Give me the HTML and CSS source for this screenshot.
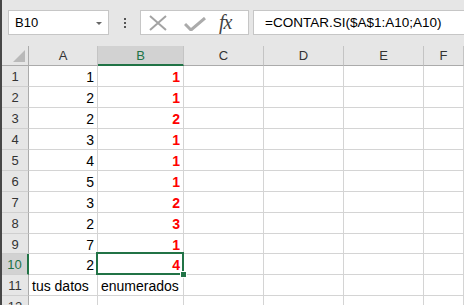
FILE: index.html
```html
<!DOCTYPE html>
<html lang="es">
<head>
    <meta charset="UTF-8">
    <meta name="viewport" content="width=device-width, initial-scale=1.0">
    <title>CONTAR.SI</title>
    <link rel="stylesheet" href="styles.css">
</head>
<body>

<div class="window">
    <div class="toolbar">
        <div class="namebox">
            <span>B10</span>
            <span class="caret"></span>
        </div>
        <div class="grip"><i></i><i></i><i></i></div>
        <div class="fbuttons">
            <svg class="icon-x" width="20" height="16" viewBox="0 0 20 16">
                <path d="M2 1 L18 15 M18 1 L2 15" stroke="#a3a3a3" stroke-width="2" fill="none"/>
            </svg>
            <svg class="icon-check" width="22" height="14" viewBox="0 0 22 14">
                <path d="M1 7 L7 13 L21 1" stroke="#ababab" stroke-width="3" fill="none"/>
            </svg>
            <span class="fx">fx</span>
        </div>
        <div class="formula">=CONTAR.SI($A$1:A10;A10)</div>
    </div>

    <div class="sheet">
        <div class="corner"><span class="tri"></span></div>
        <div class="colhead">A</div>
        <div class="colhead active">B</div>
        <div class="colhead">C</div>
        <div class="colhead">D</div>
        <div class="colhead">E</div>
        <div class="colhead">F</div>

        <div class="rowhead">1</div><div class="cell num">1</div><div class="cell num red">1</div><div class="cell"></div><div class="cell"></div><div class="cell"></div><div class="cell"></div>
        <div class="rowhead">2</div><div class="cell num">2</div><div class="cell num red">1</div><div class="cell"></div><div class="cell"></div><div class="cell"></div><div class="cell"></div>
        <div class="rowhead">3</div><div class="cell num">2</div><div class="cell num red">2</div><div class="cell"></div><div class="cell"></div><div class="cell"></div><div class="cell"></div>
        <div class="rowhead">4</div><div class="cell num">3</div><div class="cell num red">1</div><div class="cell"></div><div class="cell"></div><div class="cell"></div><div class="cell"></div>
        <div class="rowhead">5</div><div class="cell num">4</div><div class="cell num red">1</div><div class="cell"></div><div class="cell"></div><div class="cell"></div><div class="cell"></div>
        <div class="rowhead">6</div><div class="cell num">5</div><div class="cell num red">1</div><div class="cell"></div><div class="cell"></div><div class="cell"></div><div class="cell"></div>
        <div class="rowhead">7</div><div class="cell num">3</div><div class="cell num red">2</div><div class="cell"></div><div class="cell"></div><div class="cell"></div><div class="cell"></div>
        <div class="rowhead">8</div><div class="cell num">2</div><div class="cell num red">3</div><div class="cell"></div><div class="cell"></div><div class="cell"></div><div class="cell"></div>
        <div class="rowhead">9</div><div class="cell num">7</div><div class="cell num red">1</div><div class="cell"></div><div class="cell"></div><div class="cell"></div><div class="cell"></div>
        <div class="rowhead active">10</div><div class="cell num">2</div><div class="cell num red selected">4<span class="handle"></span></div><div class="cell"></div><div class="cell"></div><div class="cell"></div><div class="cell"></div>
        <div class="rowhead">11</div><div class="cell">tus datos</div><div class="cell">enumerados</div><div class="cell"></div><div class="cell"></div><div class="cell"></div><div class="cell"></div>
        <div class="rowhead">12</div><div class="cell"></div><div class="cell"></div><div class="cell"></div><div class="cell"></div><div class="cell"></div><div class="cell"></div>
    </div>
</div>

</body>
</html>
```

FILE: styles.css
```css
body {
    margin: 0;
    padding: 0;
    font-family: "Liberation Sans", Arial, sans-serif;
    color: #000;
    background: #e6e6e6;
}

.window {
    width: 462px;
    height: 305px;
    overflow: hidden;
    border-left: 2px solid #474747;
    background: #e6e6e6;
}

/* formula bar */
.toolbar {
    height: 46px;
    box-sizing: border-box;
    padding-top: 10px;
    display: flex;
    align-items: flex-start;
}

.namebox {
    margin-left: 6px;
    width: 101px;
    height: 25px;
    box-sizing: border-box;
    background: #fff;
    border: 1px solid #c6c6c6;
    display: flex;
    align-items: center;
    justify-content: space-between;
    padding: 0 6px 0 6px;
    font-size: 13px;
}

.caret {
    width: 0;
    height: 0;
    border-left: 3px solid transparent;
    border-right: 3px solid transparent;
    border-top: 3px solid #666;
    margin-top: 1px;
}

.grip {
    width: 3px;
    margin: 8px 13px 0 15px;
    display: flex;
    flex-direction: column;
    gap: 2px;
}

.grip i {
    display: block;
    width: 2px;
    height: 2px;
    background: #555;
}

.fbuttons {
    width: 109px;
    height: 25px;
    box-sizing: border-box;
    background: #fff;
    border: 1px solid #c6c6c6;
    display: flex;
    align-items: center;
    padding-left: 7px;
}

.icon-x {
    margin-top: 1px;
}

.icon-check {
    margin-left: 16px;
    margin-top: 2px;
}

.fx {
    margin-left: 13px;
    font-family: "Liberation Serif", "Times New Roman", serif;
    font-style: italic;
    font-size: 20px;
    color: #444;
    letter-spacing: -1px;
}

.formula {
    margin-left: 4px;
    flex: 1;
    height: 25px;
    box-sizing: border-box;
    background: #fff;
    border: 1px solid #c6c6c6;
    border-right: none;
    padding-left: 11px;
    font-size: 13.5px;
    line-height: 23px;
    white-space: nowrap;
}

/* grid */
.sheet {
    display: grid;
    grid-template-columns: 27px 69px 86px 80px 80px 80px 1fr;
    grid-template-rows: 20px repeat(8, 21px) 20px repeat(3, 21px);
    background: #fff;
}

.corner,
.colhead,
.rowhead {
    background: #e6e6e6;
    color: #333;
    box-sizing: border-box;
}

.corner {
    position: relative;
    border-right: 1px solid #ababab;
    border-bottom: 1px solid #ababab;
}

.corner .tri {
    position: absolute;
    right: 3px;
    bottom: 3px;
    width: 0;
    height: 0;
    border-left: 12px solid transparent;
    border-bottom: 12px solid #b9b9b9;
}

.colhead {
    border-right: 1px solid #c4c4c4;
    border-bottom: 1px solid #ababab;
    text-align: center;
    font-size: 13px;
    line-height: 20px;
}

.colhead.active {
    background: #d2d2d2;
    color: #217346;
    border-bottom: 2px solid #217346;
    line-height: 19px;
}

.rowhead {
    border-right: 1px solid #ababab;
    border-bottom: 1px solid #cfcfcf;
    text-align: center;
    font-size: 13px;
    line-height: 19px;
    padding-top: 1px;
    overflow: hidden;
}

.rowhead.active {
    background: #d2d2d2;
    color: #217346;
    border-right: 2px solid #217346;
}

.cell {
    box-sizing: border-box;
    border-right: 1px solid #d4d4d4;
    border-bottom: 1px solid #d4d4d4;
    font-size: 14px;
    line-height: 18px;
    padding: 2px 2px 0 3px;
    white-space: nowrap;
    overflow: hidden;
}

.cell.num {
    text-align: right;
    padding-right: 3px;
}

.cell.red {
    color: #ff0000;
    font-weight: bold;
}

.cell.selected {
    position: relative;
    overflow: visible;
    z-index: 1;
}

.cell.selected::before {
    content: "";
    position: absolute;
    top: -2px;
    left: -2px;
    right: -1px;
    bottom: -1px;
    border: 2px solid #217346;
}

.handle {
    position: absolute;
    right: -4px;
    bottom: -4px;
    width: 5px;
    height: 5px;
    background: #217346;
    border: 1px solid #fff;
}
```
